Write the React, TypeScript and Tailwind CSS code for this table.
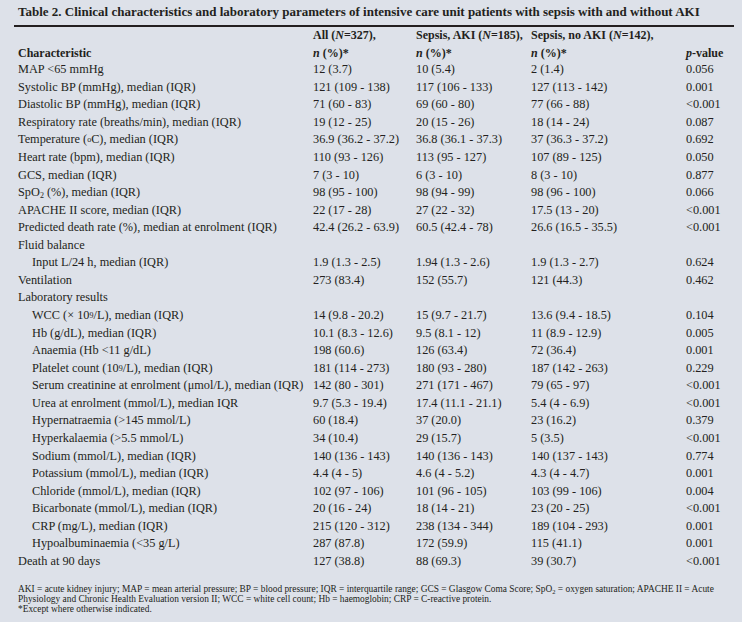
import React from "react";

type Row = { label: React.ReactNode; indent?: boolean; vals?: [string, string, string, string] };

const sup = (s: string) => <sup className="text-[8px] relative -top-[1px]">{s}</sup>;

const rows: Row[] = [
  { label: "MAP <65 mmHg", vals: ["12 (3.7)", "10 (5.4)", "2 (1.4)", "0.056"] },
  { label: "Systolic BP (mmHg), median (IQR)", vals: ["121 (109 - 138)", "117 (106 - 133)", "127 (113 - 142)", "0.001"] },
  { label: "Diastolic BP (mmHg), median (IQR)", vals: ["71 (60 - 83)", "69 (60 - 80)", "77 (66 - 88)", "<0.001"] },
  { label: "Respiratory rate (breaths/min), median (IQR)", vals: ["19 (12 - 25)", "20 (15 - 26)", "18 (14 - 24)", "0.087"] },
  { label: <>Temperature ({sup("o")}C), median (IQR)</>, vals: ["36.9 (36.2 - 37.2)", "36.8 (36.1 - 37.3)", "37 (36.3 - 37.2)", "0.692"] },
  { label: "Heart rate (bpm), median (IQR)", vals: ["110 (93 - 126)", "113 (95 - 127)", "107 (89 - 125)", "0.050"] },
  { label: "GCS, median (IQR)", vals: ["7 (3 - 10)", "6 (3 - 10)", "8 (3 - 10)", "0.877"] },
  { label: <>SpO<sub className="text-[8px]">2</sub> (%), median (IQR)</>, vals: ["98 (95 - 100)", "98 (94 - 99)", "98 (96 - 100)", "0.066"] },
  { label: "APACHE II score, median (IQR)", vals: ["22 (17 - 28)", "27 (22 - 32)", "17.5 (13 - 20)", "<0.001"] },
  { label: "Predicted death rate (%), median at enrolment (IQR)", vals: ["42.4 (26.2 - 63.9)", "60.5 (42.4 - 78)", "26.6 (16.5 - 35.5)", "<0.001"] },
  { label: "Fluid balance" },
  { label: "Input L/24 h, median (IQR)", indent: true, vals: ["1.9 (1.3 - 2.5)", "1.94 (1.3 - 2.6)", "1.9 (1.3 - 2.7)", "0.624"] },
  { label: "Ventilation", vals: ["273 (83.4)", "152 (55.7)", "121 (44.3)", "0.462"] },
  { label: "Laboratory results" },
  { label: <>WCC (× 10{sup("9")}/L), median (IQR)</>, indent: true, vals: ["14 (9.8 - 20.2)", "15 (9.7 - 21.7)", "13.6 (9.4 - 18.5)", "0.104"] },
  { label: "Hb (g/dL), median (IQR)", indent: true, vals: ["10.1 (8.3 - 12.6)", "9.5 (8.1 - 12)", "11 (8.9 - 12.9)", "0.005"] },
  { label: "Anaemia (Hb <11 g/dL)", indent: true, vals: ["198 (60.6)", "126 (63.4)", "72 (36.4)", "0.001"] },
  { label: <>Platelet count (10{sup("9")}/L), median (IQR)</>, indent: true, vals: ["181 (114 - 273)", "180 (93 - 280)", "187 (142 - 263)", "0.229"] },
  { label: "Serum creatinine at enrolment (μmol/L), median (IQR)", indent: true, vals: ["142 (80 - 301)", "271 (171 - 467)", "79 (65 - 97)", "<0.001"] },
  { label: "Urea at enrolment (mmol/L), median IQR", indent: true, vals: ["9.7 (5.3 - 19.4)", "17.4 (11.1 - 21.1)", "5.4 (4 - 6.9)", "<0.001"] },
  { label: "Hypernatraemia (>145 mmol/L)", indent: true, vals: ["60 (18.4)", "37 (20.0)", "23 (16.2)", "0.379"] },
  { label: "Hyperkalaemia (>5.5 mmol/L)", indent: true, vals: ["34 (10.4)", "29 (15.7)", "5 (3.5)", "<0.001"] },
  { label: "Sodium (mmol/L), median (IQR)", indent: true, vals: ["140 (136 - 143)", "140 (136 - 143)", "140 (137 - 143)", "0.774"] },
  { label: "Potassium (mmol/L), median (IQR)", indent: true, vals: ["4.4 (4 - 5)", "4.6 (4 - 5.2)", "4.3 (4 - 4.7)", "0.001"] },
  { label: "Chloride (mmol/L), median (IQR)", indent: true, vals: ["102 (97 - 106)", "101 (96 - 105)", "103 (99 - 106)", "0.004"] },
  { label: "Bicarbonate (mmol/L), median (IQR)", indent: true, vals: ["20 (16 - 24)", "18 (14 - 21)", "23 (20 - 25)", "<0.001"] },
  { label: "CRP (mg/L), median (IQR)", indent: true, vals: ["215 (120 - 312)", "238 (134 - 344)", "189 (104 - 293)", "0.001"] },
  { label: "Hypoalbuminaemia (<35 g/L)", indent: true, vals: ["287 (87.8)", "172 (59.9)", "115 (41.1)", "0.001"] },
  { label: "Death at 90 days", vals: ["127 (38.8)", "88 (69.3)", "39 (30.7)", "<0.001"] },
];

const cols = "grid grid-cols-[295px_103px_115px_155px_1fr]";

export default function App() {
  return (
    <div className="w-[746px] h-[629px] bg-white">
      <div
        className="w-[742px] h-[622px] bg-[#dde1e9] text-[#231f20] pt-[3px]"
        style={{ fontFamily: '"Liberation Serif", "DejaVu Serif", serif' }}
      >
        <div className="pl-[18px] text-[13px] font-bold leading-[18px] whitespace-nowrap">
          Table 2. Clinical characteristics and laboratory parameters of intensive care unit patients with sepsis with and without AKI
        </div>
        <div className="ml-[14px] w-[720px] h-[2px] bg-[#231f20] mt-[4px]" />
        <div className="pl-[18px] leading-[17.57px]">
          <div className={`${cols} font-bold text-[12px]`}>
            <div className="flex items-end">Characteristic</div>
            <div>
              <div>All (<i>N</i>=327),</div>
              <div><i>n</i> (%)*</div>
            </div>
            <div>
              <div>Sepsis, AKI (<i>N</i>=185),</div>
              <div><i>n</i> (%)*</div>
            </div>
            <div>
              <div>Sepsis, no AKI (<i>N</i>=142),</div>
              <div><i>n</i> (%)*</div>
            </div>
            <div className="flex items-end"><span><i>p</i>-value</span></div>
          </div>
          <div className="text-[12.3px] -mt-[1px]">
            {rows.map((r, i) => (
              <div key={i} className={cols}>
                <div className={`whitespace-nowrap ${r.indent ? "pl-[14px]" : ""}`}>{r.label}</div>
                {r.vals ? (
                  r.vals.map((v, j) => (
                    <div key={j} className="whitespace-nowrap">{v}</div>
                  ))
                ) : (
                  <>
                    <div />
                    <div />
                    <div />
                    <div />
                  </>
                )}
              </div>
            ))}
          </div>
          <div className="mt-[14px] text-[9.4px] leading-[10px] whitespace-nowrap">
            <div>
              AKI = acute kidney injury; MAP = mean arterial pressure; BP = blood pressure; IQR = interquartile range; GCS = Glasgow Coma Score; SpO<sub className="text-[6.5px]">2</sub> = oxygen saturation; APACHE II = Acute
            </div>
            <div>Physiology and Chronic Health Evaluation version II; WCC = white cell count; Hb = haemoglobin; CRP = C-reactive protein.</div>
            <div>*Except where otherwise indicated.</div>
          </div>
        </div>
      </div>
    </div>
  );
}
